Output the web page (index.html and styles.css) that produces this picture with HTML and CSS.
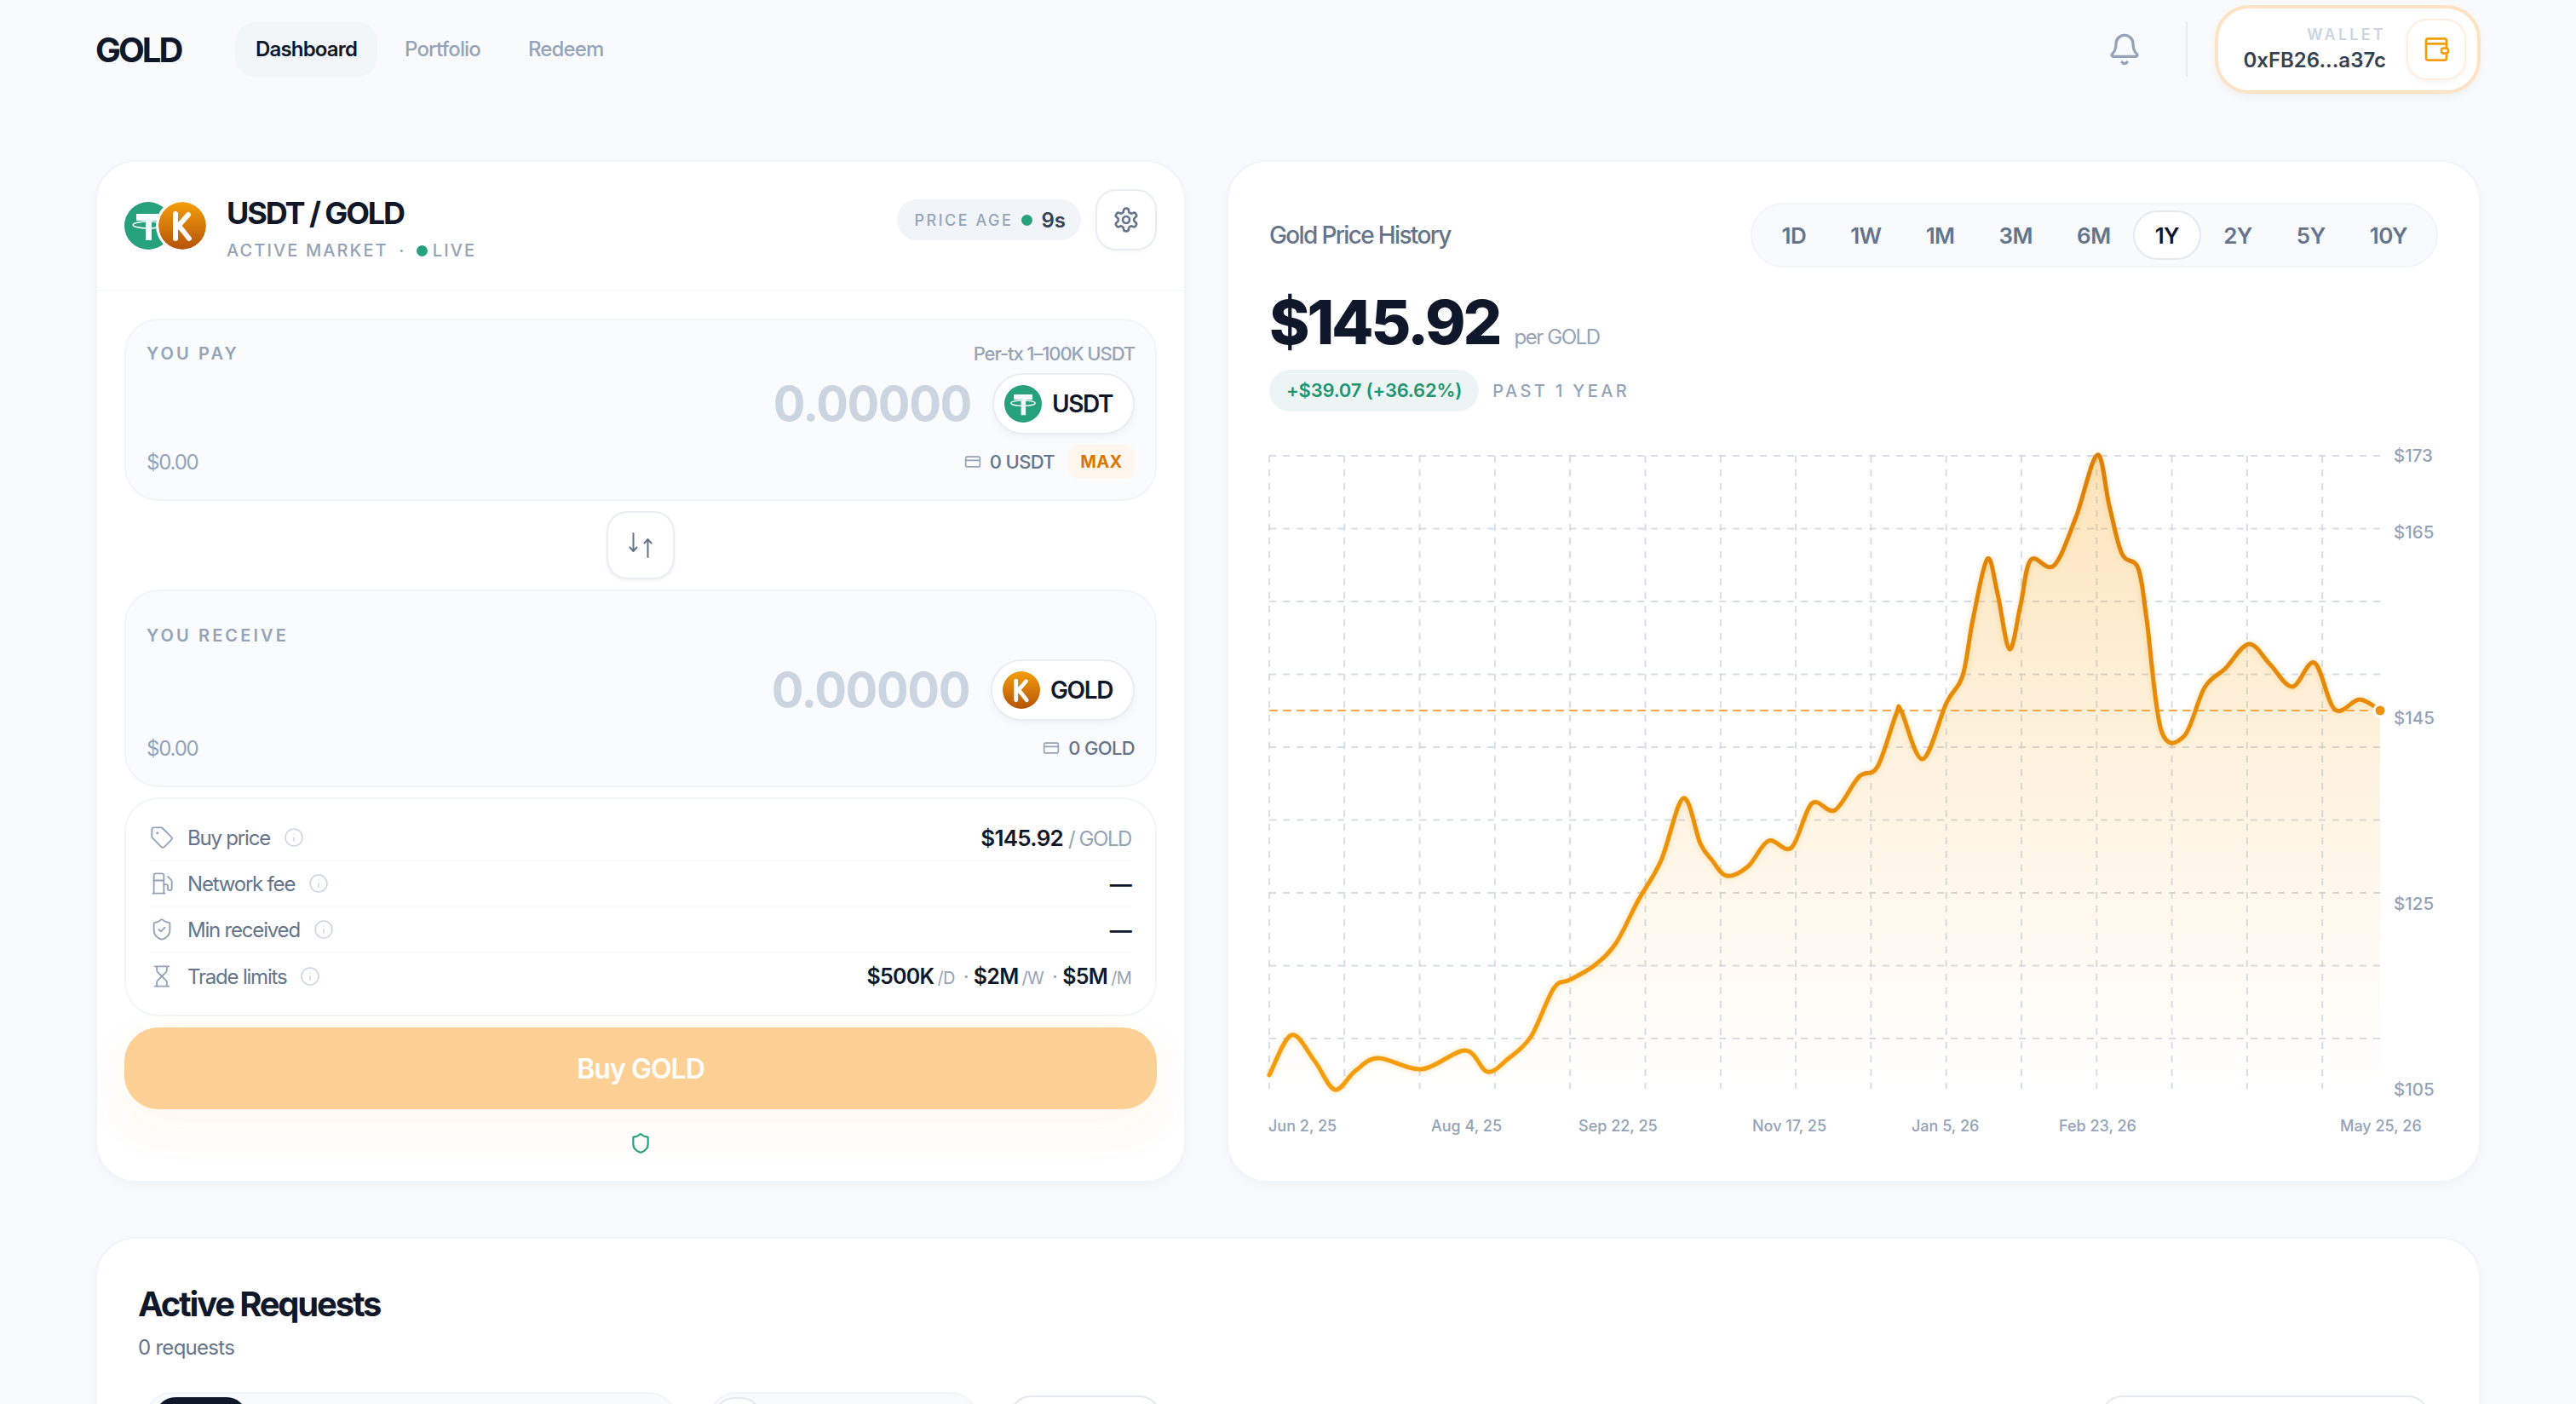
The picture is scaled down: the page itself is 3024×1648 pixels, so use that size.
FILE: index.html
```html
<!DOCTYPE html>
<html lang="en">
<head>
  <meta charset="UTF-8">
  <meta name="viewport" content="width=device-width, initial-scale=1.0">
  <title>GOLD Dashboard</title>
  <link rel="stylesheet" href="styles.css">
</head>
<body>

  <!-- Shared icons -->
  <svg class="defs" width="0" height="0" aria-hidden="true">
    <defs>
      <linearGradient id="goldCoin" x1="0" y1="0" x2="0" y2="1">
        <stop offset="0" stop-color="#f59e0b"/>
        <stop offset="1" stop-color="#b45309"/>
      </linearGradient>
      <symbol id="coinUsdt" viewBox="0 0 56 56">
        <circle cx="28" cy="28" r="28" fill="#26a17b"/>
        <path d="M14 14h28v8H32v23h-7V22H14z" fill="#fff"/>
        <ellipse cx="28" cy="27" rx="18" ry="4" fill="none" stroke="#fff" stroke-width="1.5"/>
      </symbol>
      <symbol id="coinGold" viewBox="0 0 56 56">
        <circle cx="28" cy="28" r="28" fill="url(#goldCoin)"/>
        <path d="M20 14v29M35 15 20 32M24 28l12 15" fill="none" stroke="#fff" stroke-width="6" stroke-linecap="round"/>
      </symbol>
      <symbol id="iconInfo" viewBox="0 0 24 24">
        <circle cx="12" cy="12" r="10"/><path d="M12 16v-4"/><path d="M12 8h.01"/>
      </symbol>
      <symbol id="iconCard" viewBox="0 0 24 24">
        <rect x="2" y="5" width="20" height="14" rx="2"/><path d="M2 10h20"/>
      </symbol>
    </defs>
  </svg>

  <header class="topbar">
    <div class="topbar-left">
      <div class="logo">GOLD</div>
      <nav class="nav">
        <a class="nav-item active">Dashboard</a>
        <a class="nav-item">Portfolio</a>
        <a class="nav-item">Redeem</a>
      </nav>
    </div>
    <div class="topbar-right">
      <svg class="icon bell" viewBox="0 0 24 24">
        <path d="M10.268 21a2 2 0 0 0 3.464 0"/>
        <path d="M3.262 15.326A1 1 0 0 0 4 17h16a1 1 0 0 0 .74-1.673C19.41 13.956 18 12.499 18 8A6 6 0 0 0 6 8c0 4.499-1.411 5.956-2.738 7.326"/>
      </svg>
      <div class="topbar-sep"></div>
      <div class="wallet">
        <div class="wallet-text">
          <div class="wallet-label">WALLET</div>
          <div class="wallet-addr">0xFB26...a37c</div>
        </div>
        <div class="wallet-icon">
          <svg class="icon" viewBox="0 0 24 24">
            <rect x="3" y="2.500" width="18" height="19" rx="2"/>
            <path d="M3 7h18"/>
            <rect x="16.500" y="11" width="6" height="4.500" rx="2" fill="#fff"/>
          </svg>
        </div>
      </div>
    </div>
  </header>

  <main class="main">
    <div class="top-grid">

      <!-- Trade card -->
      <section class="card trade">
        <div class="trade-head">
          <div class="pair-icons">
            <svg class="pair-coin"><use href="#coinUsdt"/></svg>
            <svg class="pair-coin pair-coin-front"><use href="#coinGold"/></svg>
          </div>
          <div class="pair-text">
            <h1 class="pair-title">USDT / GOLD</h1>
            <div class="pair-sub">ACTIVE MARKET <span class="pair-middot">·</span> <span class="live-dot"></span>LIVE</div>
          </div>
          <div class="price-age">
            <span class="price-age-label">PRICE AGE</span>
            <span class="live-dot live-dot-big"></span>
            <span class="price-age-value">9s</span>
          </div>
          <button class="settings-btn">
            <svg class="icon" viewBox="0 0 24 24">
              <path d="M12.22 2h-.44a2 2 0 0 0-2 2v.18a2 2 0 0 1-1 1.73l-.43.25a2 2 0 0 1-2 0l-.15-.08a2 2 0 0 0-2.73.73l-.22.38a2 2 0 0 0 .73 2.73l.15.1a2 2 0 0 1 1 1.72v.51a2 2 0 0 1-1 1.74l-.15.09a2 2 0 0 0-.73 2.73l.22.38a2 2 0 0 0 2.73.73l.15-.08a2 2 0 0 1 2 0l.43.25a2 2 0 0 1 1 1.73V20a2 2 0 0 0 2 2h.44a2 2 0 0 0 2-2v-.18a2 2 0 0 1 1-1.73l.43-.25a2 2 0 0 1 2 0l.15.08a2 2 0 0 0 2.73-.73l.22-.39a2 2 0 0 0-.73-2.73l-.15-.08a2 2 0 0 1-1-1.74v-.5a2 2 0 0 1 1-1.74l.15-.09a2 2 0 0 0 .73-2.73l-.22-.38a2 2 0 0 0-2.73-.73l-.15.08a2 2 0 0 1-2 0l-.43-.25a2 2 0 0 1-1-1.73V4a2 2 0 0 0-2-2z"/>
              <circle cx="12" cy="12" r="3"/>
            </svg>
          </button>
        </div>

        <div class="trade-body">
          <div class="swap-box">
            <div class="swap-row">
              <span class="swap-label">YOU PAY</span>
              <span class="swap-hint">Per-tx 1–100K USDT</span>
            </div>
            <div class="swap-main">
              <span class="swap-value">0.00000</span>
              <div class="token-chip">
                <svg class="token-coin"><use href="#coinUsdt"/></svg>
                <span>USDT</span>
              </div>
            </div>
            <div class="swap-row swap-foot">
              <span class="swap-usd">$0.00</span>
              <div class="swap-balance">
                <svg class="icon balance-icon"><use href="#iconCard"/></svg>
                <span>0 USDT</span>
                <span class="max-btn">MAX</span>
              </div>
            </div>
          </div>

          <button class="flip-btn">
            <svg class="icon" viewBox="0 0 32 32">
              <path d="M7.500 2v21M3.500 18.500l4 4.500 4-4.500"/>
              <path d="M24.500 30V9M20.500 13.500l4-4.500 4 4.500"/>
            </svg>
          </button>

          <div class="swap-box swap-box-receive">
            <div class="swap-row">
              <span class="swap-label">YOU RECEIVE</span>
            </div>
            <div class="swap-main">
              <span class="swap-value">0.00000</span>
              <div class="token-chip">
                <svg class="token-coin"><use href="#coinGold"/></svg>
                <span>GOLD</span>
              </div>
            </div>
            <div class="swap-row swap-foot">
              <span class="swap-usd">$0.00</span>
              <div class="swap-balance">
                <svg class="icon balance-icon"><use href="#iconCard"/></svg>
                <span>0 GOLD</span>
              </div>
            </div>
          </div>

          <div class="details">
            <div class="detail-row">
              <svg class="icon detail-icon" viewBox="0 0 24 24">
                <path d="M12.586 2.586A2 2 0 0 0 11.172 2H4a2 2 0 0 0-2 2v7.172a2 2 0 0 0 .586 1.414l8.704 8.704a2.426 2.426 0 0 0 3.42 0l6.58-6.58a2.426 2.426 0 0 0 0-3.42z"/>
                <circle cx="7.500" cy="7.500" r=".5"/>
              </svg>
              <span class="detail-label">Buy price</span>
              <svg class="icon info-icon"><use href="#iconInfo"/></svg>
              <span class="detail-value"><b>$145.92</b> <i class="per-unit">/ GOLD</i></span>
            </div>
            <div class="detail-row">
              <svg class="icon detail-icon" viewBox="0 0 24 24">
                <path d="M3 22h12"/><path d="M4 9h10"/>
                <path d="M14 22V4a2 2 0 0 0-2-2H6a2 2 0 0 0-2 2v18"/>
                <path d="M14 13h2a2 2 0 0 1 2 2v2a2 2 0 0 0 2 2a2 2 0 0 0 2-2V9.830a2 2 0 0 0-.59-1.420L18 5"/>
              </svg>
              <span class="detail-label">Network fee</span>
              <svg class="icon info-icon"><use href="#iconInfo"/></svg>
              <span class="detail-value"><b>—</b></span>
            </div>
            <div class="detail-row">
              <svg class="icon detail-icon" viewBox="0 0 24 24">
                <path d="M20 13c0 5-3.500 7.500-7.660 8.950a1 1 0 0 1-.67-.01C7.500 20.500 4 18 4 13V6a1 1 0 0 1 1-1c2 0 4.500-1.200 6.240-2.720a1.170 1.170 0 0 1 1.520 0C14.510 3.810 17 5 19 5a1 1 0 0 1 1 1z"/>
                <path d="m9 12 2 2 4-4"/>
              </svg>
              <span class="detail-label">Min received</span>
              <svg class="icon info-icon"><use href="#iconInfo"/></svg>
              <span class="detail-value"><b>—</b></span>
            </div>
            <div class="detail-row">
              <svg class="icon detail-icon" viewBox="0 0 24 24">
                <path d="M5 22h14"/><path d="M5 2h14"/>
                <path d="M17 22v-4.172a2 2 0 0 0-.586-1.414L12 12l-4.414 4.414A2 2 0 0 0 7 17.828V22"/>
                <path d="M7 2v4.172a2 2 0 0 0 .586 1.414L12 12l4.414-4.414A2 2 0 0 0 17 6.172V2"/>
              </svg>
              <span class="detail-label">Trade limits</span>
              <svg class="icon info-icon"><use href="#iconInfo"/></svg>
              <span class="detail-value limits">
                <b>$500K</b><i>/D</i><em>·</em><b>$2M</b><i>/W</i><em>·</em><b>$5M</b><i>/M</i>
              </span>
            </div>
          </div>

          <button class="buy-btn">Buy GOLD</button>

          <svg class="icon safe-icon" viewBox="0 0 24 24">
            <path d="M20 13c0 5-3.500 7.500-7.660 8.950a1 1 0 0 1-.67-.01C7.500 20.500 4 18 4 13V6a1 1 0 0 1 1-1c2 0 4.500-1.200 6.240-2.720a1.170 1.170 0 0 1 1.520 0C14.510 3.810 17 5 19 5a1 1 0 0 1 1 1z"/>
          </svg>
        </div>
      </section>

      <!-- Price chart card -->
      <section class="card history">
        <div class="history-head">
          <h2 class="history-title">Gold Price History</h2>
          <div class="ranges">
            <button class="range">1D</button>
            <button class="range">1W</button>
            <button class="range">1M</button>
            <button class="range">3M</button>
            <button class="range">6M</button>
            <button class="range active">1Y</button>
            <button class="range">2Y</button>
            <button class="range">5Y</button>
            <button class="range">10Y</button>
          </div>
        </div>
        <div class="price-line">
          <span class="price-big">$145.92</span>
          <span class="price-unit">per GOLD</span>
        </div>
        <div class="change-line">
          <span class="change-pill">+$39.07 (+36.62%)</span>
          <span class="change-label">PAST 1 YEAR</span>
        </div>

        <svg id="chart" class="chart" width="1372" height="840" viewBox="1490 510 1372 840">
          <defs>
            <linearGradient id="areaFill" x1="0" y1="0" x2="0" y2="1">
              <stop offset="0" stop-color="#f59e0b" stop-opacity="0.28"/>
              <stop offset="0.45" stop-color="#f59e0b" stop-opacity="0.14"/>
              <stop offset="1" stop-color="#f59e0b" stop-opacity="0"/>
            </linearGradient>
            <linearGradient id="lineStroke" x1="0" y1="0" x2="0" y2="1">
              <stop offset="0" stop-color="#dd7f06"/>
              <stop offset="1" stop-color="#f59e0b"/>
            </linearGradient>
          </defs>
          <g id="grid" class="chart-grid"></g>
          <path id="area" fill="url(#areaFill)"/>
          <path class="chart-ref" d="M1490 834H2794"/>
          <path id="line" class="chart-line" stroke="url(#lineStroke)"/>
          <circle class="chart-dot" cx="2794" cy="834" r="7"/>

          <text class="chart-text chart-y" x="2810" y="542">$173</text>
          <text class="chart-text chart-y" x="2810" y="632">$165</text>
          <text class="chart-text chart-y" x="2810" y="850">$145</text>
          <text class="chart-text chart-y" x="2810" y="1068">$125</text>
          <text class="chart-text chart-y" x="2810" y="1286">$105</text>

          <text class="chart-text" x="1489" y="1328">Jun 2, 25</text>
          <text class="chart-text" x="1680" y="1328">Aug 4, 25</text>
          <text class="chart-text" x="1853" y="1328">Sep 22, 25</text>
          <text class="chart-text" x="2057" y="1328">Nov 17, 25</text>
          <text class="chart-text" x="2244" y="1328">Jan 5, 26</text>
          <text class="chart-text" x="2417" y="1328">Feb 23, 26</text>
          <text class="chart-text" x="2747" y="1328">May 25, 26</text>
        </svg>
      </section>
    </div>

    <!-- Requests card, runs past the fold -->
    <section class="card requests">
      <h2 class="requests-title">Active Requests</h2>
      <div class="requests-count">0 requests</div>
      <div class="requests-filters">
        <div class="seg seg-status"><span class="seg-on"></span></div>
        <div class="seg seg-side"><span class="seg-box"></span></div>
        <div class="filter-box filter-small"></div>
        <div class="filter-box filter-wide"></div>
      </div>
    </section>
  </main>

  <script src="chart.js"></script>
</body>
</html>
```

FILE: styles.css
```css
* {
  box-sizing: border-box;
}

html, body {
  height: 1648px;
  overflow: hidden; /* Only the first screen is shown */
}

body {
  margin: 0;
  background-color: #f9fafc;
  color: #0f172a;
  font-family: Inter, "Noto Sans", sans-serif;
  padding: 0 112px;
}

button {
  font-family: inherit;
  cursor: pointer;
}

.defs {
  position: absolute;
}

.icon {
  fill: none;
  stroke: currentColor;
  stroke-width: 2;
  stroke-linecap: round;
  stroke-linejoin: round;
}

/* Top bar */
.topbar {
  height: 116px;
  display: flex;
  align-items: center;
  justify-content: space-between;
}

.topbar-left, .topbar-right {
  display: flex;
  align-items: center;
}

.logo {
  font-size: 40px;
  font-weight: 700;
  letter-spacing: -0.075em;
  width: 164px;
}

.nav {
  display: flex;
  gap: 8px;
}

.nav-item {
  padding: 0 24px;
  height: 64px;
  line-height: 64px;
  border-radius: 24px;
  font-size: 24px;
  font-weight: 500;
  letter-spacing: -0.035em;
  color: #94a3b8;
}

.nav-item.active {
  background-color: #f3f6f9;
  color: #0f172a;
  font-weight: 600;
}

.bell {
  width: 40px;
  height: 40px;
  color: #94a3b8;
}

.topbar-sep {
  width: 2px;
  height: 64px;
  background-color: #e7ebf0;
  margin: 0 32px 0 52px;
}

.wallet {
  width: 312px;
  height: 104px;
  display: flex;
  align-items: center;
  justify-content: flex-end;
  gap: 24px;
  padding-right: 13px;
  background-color: #fff;
  border: 4px solid #fde3c4;
  border-radius: 40px;
  box-shadow: 0 4px 10px rgba(15, 23, 42, 0.04);
}

.wallet-text {
  text-align: right;
}

.wallet-label {
  font-size: 18px;
  font-weight: 600;
  line-height: 26px;
  letter-spacing: 0.18em;
  color: #cbd5e1;
}

.wallet-addr {
  font-size: 24px;
  font-weight: 600;
  line-height: 34px;
  color: #334155;
}

.wallet-icon {
  width: 70px;
  height: 72px;
  display: flex;
  align-items: center;
  justify-content: center;
  border: 2px solid #ffeedb;
  border-radius: 24px;
  box-shadow: 0 2px 6px rgba(15, 23, 42, 0.05);
  color: #f59e0b;
}

.wallet-icon svg {
  width: 32px;
  height: 32px;
}

/* Cards */
.main {
  padding-top: 72px;
}

.top-grid {
  display: grid;
  grid-template-columns: 1280px 1472px;
  gap: 48px;
}

.card {
  background-color: #fff;
  border: 2px solid #f2f5f8;
  border-radius: 48px;
  box-shadow: 0 4px 12px rgba(30, 80, 70, 0.04);
}

.trade, .history {
  height: 1200px;
}

/* Trade card */
.trade-head {
  height: 152px;
  display: flex;
  align-items: center;
  padding: 0 32px;
  border-bottom: 2px solid #f8fafc;
}

.pair-icons {
  display: flex;
  width: 96px;
  height: 56px;
  margin-right: 24px;
}

.pair-coin {
  width: 56px;
  height: 56px;
  flex-shrink: 0;
}

.pair-coin-front {
  width: 62px;
  height: 62px;
  margin: -3px 0 0 -19px;
  padding: 3px;
  background-color: #fff;
  border-radius: 50%;
}

.pair-text {
  flex: 1;
  padding-top: 5px;
}

.pair-title {
  margin: 0;
  font-size: 36px;
  font-weight: 700;
  line-height: 44px;
  letter-spacing: -0.058em;
}

.pair-sub {
  margin-top: 8px;
  font-size: 20px;
  font-weight: 500;
  line-height: 28px;
  letter-spacing: 2.1px;
  color: #94a3b8;
}

.pair-middot {
  margin: 0 5px;
}

.live-dot {
  display: inline-block;
  width: 13px;
  height: 13px;
  margin-right: 6px;
  border-radius: 50%;
  background-color: #26a17b;
}

.price-age {
  display: flex;
  align-items: center;
  height: 48px;
  margin-top: -14px;
  padding: 0 18px 0 20px;
  border-radius: 24px;
  background-color: #f1f5f9;
}

.price-age-label {
  font-size: 18px;
  font-weight: 500;
  letter-spacing: 0.14em;
  color: #94a3b8;
}

.live-dot-big {
  margin: 0 10px 0 10px;
}

.price-age-value {
  font-size: 24px;
  font-weight: 600;
  color: #334155;
}

.settings-btn {
  width: 72px;
  height: 72px;
  margin: -14px 0 0 17px;
  padding: 0;
  display: flex;
  align-items: center;
  justify-content: center;
  background-color: #fff;
  border: 2px solid #e9edf2;
  border-radius: 24px;
  box-shadow: 0 2px 4px rgba(15, 23, 42, 0.03);
  color: #64748b;
}

.settings-btn svg {
  width: 32px;
  height: 32px;
}

.trade-body {
  padding: 32px 32px 0;
  display: flex;
  flex-direction: column;
}

.swap-box {
  height: 214px;
  padding: 24px 24px 0;
  background-color: #fafbfd;
  border: 2px solid #f2f5f8;
  border-radius: 40px;
}

.swap-box-receive {
  height: 232px;
  padding-top: 37px;
}

.swap-row {
  display: flex;
  align-items: center;
  justify-content: space-between;
  height: 30px;
}

.swap-label {
  font-size: 20px;
  font-weight: 600;
  letter-spacing: 0.155em;
  color: #94a3b8;
}

.swap-hint {
  font-size: 22px;
  font-weight: 500;
  letter-spacing: -0.05em;
  color: #94a3b8;
}

.swap-main {
  display: flex;
  align-items: center;
  justify-content: flex-end;
  gap: 25px;
  margin-top: 8px;
}

.swap-box-receive .swap-main {
  margin-top: 13px;
}

.swap-value {
  font-size: 56px;
  font-weight: 700;
  letter-spacing: -0.025em;
  color: #cbd5e1;
}

.token-chip {
  height: 72px;
  display: flex;
  align-items: center;
  gap: 12px;
  padding: 0 24px 0 12px;
  background-color: #fff;
  border: 2px solid #e9edf2;
  border-radius: 36px;
  box-shadow: 0 4px 8px rgba(15, 23, 42, 0.04);
  font-size: 28px;
  font-weight: 600;
  letter-spacing: -0.05em;
}

.token-coin {
  width: 44px;
  height: 44px;
}

.swap-foot {
  height: 40px;
  margin-top: 12px;
}

.swap-usd {
  font-size: 24px;
  letter-spacing: -0.05em;
  color: #94a3b8;
}

.swap-balance {
  display: flex;
  align-items: center;
  font-size: 22px;
  font-weight: 500;
  letter-spacing: -0.03em;
  color: #64748b;
}

.balance-icon {
  width: 20px;
  height: 20px;
  margin-right: 10px;
  color: #94a3b8;
}

.max-btn {
  width: 78px;
  height: 40px;
  line-height: 40px;
  margin-left: 16px;
  text-align: center;
  border-radius: 12px;
  background-color: #fff7ed;
  font-size: 20px;
  font-weight: 700;
  letter-spacing: 0.02em;
  color: #d97706;
}

.flip-btn {
  width: 80px;
  height: 80px;
  margin: 12px auto;
  padding: 0;
  display: flex;
  align-items: center;
  justify-content: center;
  background-color: #fff;
  border: 2px solid #e9edf2;
  border-radius: 24px;
  box-shadow: 0 2px 4px rgba(15, 23, 42, 0.05);
  color: #64748b;
}

.flip-btn svg {
  width: 32px;
  height: 32px;
}

.details {
  margin-top: 12px;
  padding: 19px 28px 17px;
  height: 257px;
  border: 2px solid #f2f5f8;
  border-radius: 40px;
}

.detail-row {
  height: 54px;
  display: flex;
  align-items: center;
  border-bottom: 2px solid #f8fafc;
  font-size: 24px;
}

.detail-row:last-child {
  border-bottom: none;
}

.detail-icon {
  width: 28px;
  height: 28px;
  margin-right: 16px;
  color: #94a3b8;
  stroke-width: 1.6;
}

.detail-label {
  letter-spacing: -0.05em;
  color: #64748b;
}

.info-icon {
  width: 24px;
  height: 24px;
  margin-left: 16px;
  color: #cbd5e1;
  stroke-width: 1.5;
}

.detail-value {
  margin-left: auto;
  letter-spacing: -0.03em;
}

.detail-value b {
  font-size: 26px;
  font-weight: 600;
}

.detail-value i {
  font-style: normal;
  color: #94a3b8;
}

.detail-value .per-unit {
  letter-spacing: -0.06em;
}

.limits b {
  font-size: 25px;
}

.limits i {
  font-size: 20px;
  margin-left: 4px;
}

.limits em {
  font-style: normal;
  margin: 0 6px 0 10px;
  color: #94a3b8;
}

.buy-btn {
  height: 96px;
  margin-top: 13px;
  border: none;
  border-radius: 40px;
  background-color: #fcd095;
  box-shadow: 0 20px 50px rgba(245, 158, 11, 0.08);
  font-size: 32px;
  font-weight: 600;
  letter-spacing: -0.03em;
  color: #fff;
}

.safe-icon {
  width: 26px;
  height: 26px;
  margin: 27px auto 0;
  color: #26a17b;
}

/* Price history card */
.history {
  padding: 48px 48px 0;
}

.history-head {
  display: flex;
  align-items: center;
  justify-content: space-between;
}

.history-title {
  margin: 0;
  font-size: 28px;
  font-weight: 500;
  letter-spacing: -0.059em;
  color: #64748b;
}

.ranges {
  display: flex;
  align-items: center;
  height: 76px;
  padding: 0 8px;
  border: 2px solid #f2f5f8;
  border-radius: 38px;
  background-color: #f8fafc;
}

.range {
  height: 58px;
  padding: 0 24px;
  border: 2px solid transparent;
  border-radius: 29px;
  background: none;
  font-size: 26px;
  font-weight: 600;
  letter-spacing: -0.02em;
  color: #64748b;
}

.range.active {
  background-color: #fff;
  border-color: #e5e9ef;
  color: #0f172a;
}

.price-line {
  display: flex;
  align-items: baseline;
  gap: 17px;
  margin-top: 28px;
}

.price-big {
  font-size: 72px;
  line-height: 72px;
  font-weight: 800;
  letter-spacing: -0.043em;
}

.price-unit {
  font-size: 24px;
  letter-spacing: -0.06em;
  color: #94a3b8;
}

.change-line {
  display: flex;
  align-items: center;
  gap: 16px;
  margin-top: 20px;
}

.change-pill {
  height: 49px;
  line-height: 49px;
  padding: 0 20px;
  border-radius: 25px;
  background-color: #ecf5f3;
  font-size: 22px;
  font-weight: 600;
  letter-spacing: -0.01em;
  color: #1f9470;
}

.change-label {
  font-size: 20px;
  font-weight: 500;
  letter-spacing: 0.17em;
  color: #94a3b8;
}

.chart {
  display: block;
  margin-top: 27px;
  overflow: visible;
}

.chart-grid line {
  stroke: #cbd5e1;
  stroke-width: 2;
  stroke-dasharray: 8 8;
  opacity: 0.8;
}

.chart-ref {
  fill: none;
  stroke: #f9a94a;
  stroke-width: 2;
  stroke-dasharray: 10 6;
}

.chart-line {
  fill: none;
  stroke-width: 5;
  stroke-linejoin: round;
  stroke-linecap: round;
  filter: drop-shadow(0 0 3px rgba(245, 158, 11, 0.35));
}

.chart-dot {
  fill: #ee920c;
  stroke: #fff;
  stroke-width: 3;
}

.chart-text {
  font-size: 18px;
  font-weight: 500;
  fill: #94a3b8;
}

.chart-y {
  font-size: 20.500px;
}

/* Requests card */
.requests {
  margin-top: 64px;
  height: 400px;
  padding: 53px 48px 0;
}

.requests-title {
  margin: 0;
  font-size: 40px;
  font-weight: 700;
  line-height: 48px;
  letter-spacing: -0.055em;
}

.requests-count {
  margin-top: 11px;
  font-size: 24px;
  line-height: 32px;
  letter-spacing: -0.03em;
  color: #64748b;
}

.requests-filters {
  display: flex;
  align-items: flex-start;
  margin-top: 36px;
  margin-left: 8px;
}

.seg {
  height: 80px;
  padding: 4px 10px;
  background-color: #f8fafc;
  border: 2px solid #f2f5f8;
  border-radius: 32px;
}

.seg-status {
  width: 624px;
}

.seg-side {
  width: 316px;
  margin-left: 38px;
  padding-left: 4px;
}

.seg-on {
  display: block;
  width: 108px;
  height: 60px;
  border-radius: 24px;
  background-color: #0f172a;
}

.seg-box {
  display: block;
  width: 56px;
  height: 60px;
  background-color: #fff;
  border: 2px solid #e5e9ef;
  border-radius: 24px;
}

.filter-box {
  height: 72px;
  margin-top: 4px;
  background-color: #fff;
  border: 2px solid #e5e9ef;
  border-radius: 24px;
}

.filter-small {
  width: 176px;
  margin-left: 38px;
}

.filter-wide {
  width: 384px;
  margin-left: auto;
  margin-right: 11px;
}
```

FILE: chart.js
```js
// Price series, in chart pixels
const points = [
  [1490,1262],[1516,1215],[1543,1245],[1567,1279],[1591,1257],[1618,1242],[1669,1255],
  [1720,1233],[1746,1258],[1770,1243],[1797,1217],[1824,1160],[1843,1150],[1872,1133],
  [1897,1107],[1923,1057],[1950,1010],[1976,937],[1996,990],[2010,1010],[2027,1028],
  [2052,1017],[2076,987],[2103,995],[2127,943],[2154,951],[2182,912],[2204,900],
  [2226,838],[2232,835],[2257,891],[2285,825],[2304,793],[2316,727],[2333,656],
  [2345,697],[2359,762],[2372,710],[2384,657],[2411,664],[2437,607],[2462,534],
  [2476,593],[2491,650],[2510,667],[2520,727],[2537,857],[2564,864],[2588,807],
  [2612,785],[2640,756],[2665,780],[2691,806],[2717,778],[2741,833],[2770,821],[2794,834]
];

function smoothPath(pts) {
  let d = 'M' + pts[0][0] + ' ' + pts[0][1];
  for (let i = 0; i < pts.length - 1; i++) {
    const p0 = pts[Math.max(i - 1, 0)];
    const p1 = pts[i];
    const p2 = pts[i + 1];
    const p3 = pts[Math.min(i + 2, pts.length - 1)];
    const c1x = p1[0] + (p2[0] - p0[0]) / 6;
    const c1y = p1[1] + (p2[1] - p0[1]) / 6;
    const c2x = p2[0] - (p3[0] - p1[0]) / 6;
    const c2y = p2[1] - (p3[1] - p1[1]) / 6;
    d += 'C' + c1x + ' ' + c1y + ' ' + c2x + ' ' + c2y + ' ' + p2[0] + ' ' + p2[1];
  }
  return d;
}

const linePath = smoothPath(points);
document.getElementById('line').setAttribute('d', linePath);
document.getElementById('area').setAttribute('d', linePath + 'V1278H1490Z');

// Dashed grid
const grid = document.getElementById('grid');
function addLine(x1, y1, x2, y2) {
  const line = document.createElementNS('http://www.w3.org/2000/svg', 'line');
  line.setAttribute('x1', x1);
  line.setAttribute('y1', y1);
  line.setAttribute('x2', x2);
  line.setAttribute('y2', y2);
  grid.appendChild(line);
}
for (let i = 0; i < 9; i++) {
  const y = 535 + i * 85.5;
  addLine(1490, y, 2794, y);
}
for (let i = 0; i < 15; i++) {
  const x = 1490 + i * 88.3;
  addLine(x, 535, x, 1278);
}
```
